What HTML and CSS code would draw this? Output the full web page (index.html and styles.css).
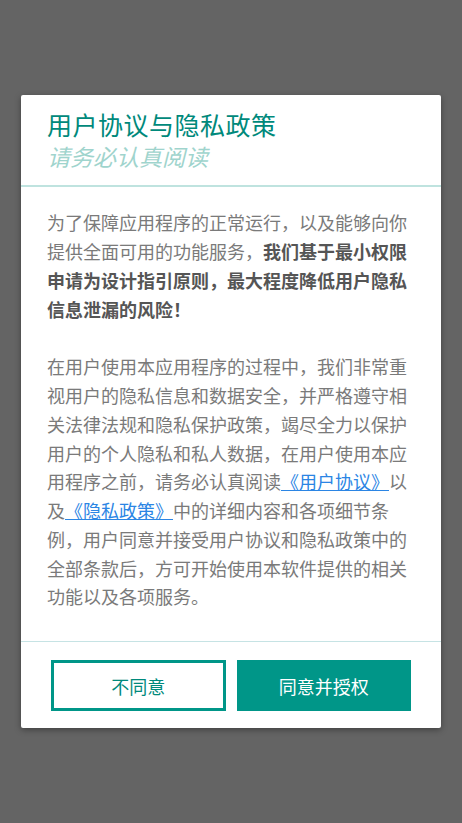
FILE: index.html
```html
<!DOCTYPE html>
<html lang="zh-CN">
<head>
    <meta charset="UTF-8">
    <meta name="viewport" content="width=device-width, initial-scale=1.0">
    <title>用户协议与隐私政策</title>
    <link rel="stylesheet" href="styles.css">
</head>
<body>
<div class="overlay">
    <div class="dialog">
        <header class="dialog-header">
            <h1>用户协议与隐私政策</h1>
            <p>请务必认真阅读</p>
        </header>
        <section class="dialog-body">
            <p>为了保障应用程序的正常运行，以及能够向你提供全面可用的功能服务，<b>我们基于最小权限申请为设计指引原则，最大程度降低用户隐私信息泄漏的风险！</b></p>
            <p>在用户使用本应用程序的过程中，我们非常重视用户的隐私信息和数据安全，并严格遵守相关法律法规和隐私保护政策，竭尽全力以保护用户的个人隐私和私人数据，在用户使用本应用程序之前，请务必认真阅读<a href="#">《用户协议》</a>以及<a href="#">《隐私政策》</a>中的详细内容和各项细节条例，用户同意并接受用户协议和隐私政策中的全部条款后，方可开始使用本软件提供的相关功能以及各项服务。</p>
        </section>
        <footer class="dialog-footer">
            <button class="btn btn-outline">不同意</button>
            <button class="btn btn-solid">同意并授权</button>
        </footer>
    </div>
</div>
</body>
</html>
```

FILE: styles.css
```css
body {
    margin: 0;
    background-color: #646464;
    font-family: "Noto Sans CJK SC", "Noto Sans", sans-serif;
}
.overlay {
    height: 100vh;
    display: flex;
    align-items: center;
    justify-content: center;
}
.dialog {
    width: 420px;
    background: #fff;
    border-radius: 2px;
    box-shadow: 0 2px 6px rgba(0, 0, 0, 0.35);
}
.dialog-header {
    padding: 14px 26px 14px;
    border-bottom: 2px solid #bfe3df;
}
.dialog-header h1 {
    margin: 0;
    font-size: 25px;
    line-height: 30px;
    letter-spacing: 0.5px;
    font-weight: normal;
    color: #00897b;
}
.dialog-header p {
    margin: 2px 0 0;
    font-size: 23px;
    line-height: 30px;
    font-style: italic;
    color: #9fd4cd;
}
.dialog-body {
    padding: 21.6px 33px 30.2px 26px;
    border-bottom: 1px solid #c6e3e4;
}
.dialog-body p {
    margin: 0;
    font-size: 18px;
    line-height: 28.8px;
    color: #7a7a7a;
}
.dialog-body p + p {
    margin-top: 28.8px;
}
.dialog-body b {
    color: #555;
}
.dialog-body a {
    color: #2b85e4;
    text-decoration: underline;
}
.dialog-footer {
    display: grid;
    grid-template-columns: 1fr 1fr;
    gap: 11px;
    padding: 18px 30px 17px;
}
.btn {
    height: 51px;
    padding: 0;
    font-family: inherit;
    font-size: 18px;
    border-radius: 0;
    cursor: pointer;
}
.btn-outline {
    background: #fff;
    color: #00897b;
    border: 3px solid #009688;
}
.btn-solid {
    background: #009688;
    color: #fff;
    border: none;
}
```
